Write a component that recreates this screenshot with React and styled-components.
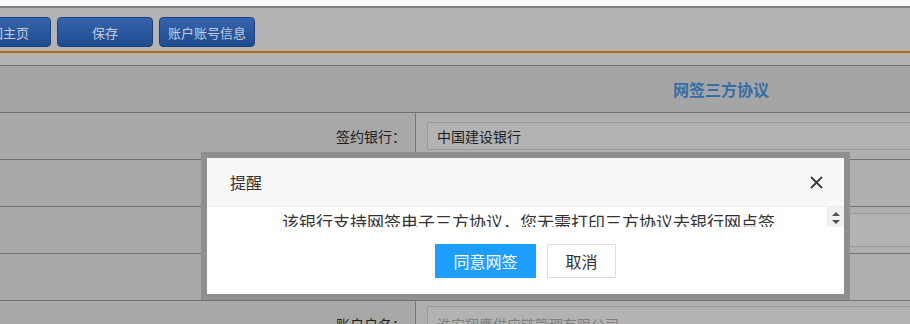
import React from 'react'
import styled, { createGlobalStyle } from 'styled-components'

const GlobalStyle = createGlobalStyle`
  html, body {
    margin: 0;
    padding: 0;
    width: 910px;
    height: 324px;
    overflow: hidden;
    background: #a9a9a9;
  }
  body {
    font-family: "Noto Sans CJK SC", "Noto Sans", "Liberation Sans", sans-serif;
  }
`

const rows = [
  { label: '签约银行：', value: '中国建设银行', box: 28 },
  { label: '开户银行：' },
  { label: '银行账号：', value: '', box: 34 },
  { label: '签约状态：' },
  { label: '账户户名：', value: '淮安翔鹰供应链管理有限公司', box: 36, muted: true, top: true },
]

export default function App() {
  return (
    <Page>
      <GlobalStyle />
      <TopStrip />
      <Toolbar>
        <ToolButton>返回主页</ToolButton>
        <ToolButton>保存</ToolButton>
        <ToolButton>账户账号信息</ToolButton>
      </Toolbar>
      <Spacer />
      <Table>
        <HeaderRow>
          <HeaderTitle>网签三方协议</HeaderTitle>
        </HeaderRow>
        {rows.map((row) => (
          <Row key={row.label}>
            <LabelCell>{row.label}</LabelCell>
            <ValueCell $top={row.top}>
              {row.box && (
                <InputBox $height={row.box} $muted={row.muted}>
                  {row.value}
                </InputBox>
              )}
            </ValueCell>
          </Row>
        ))}
      </Table>

      <Dialog>
        <DialogHeader>
          <DialogTitle>提醒</DialogTitle>
          <CloseButton>
            <svg width="13" height="13" viewBox="0 0 13 13">
              <path d="M1 1 L12 12 M12 1 L1 12" stroke="#3a3a3a" strokeWidth="1.8" fill="none" />
            </svg>
          </CloseButton>
        </DialogHeader>
        <DialogBody>
          <Message>该银行支持网签电子三方协议，您无需打印三方协议去银行网点签约，请确认是否同意网签。</Message>
          <Scrollbar>
            <Arrow $up />
            <Arrow />
          </Scrollbar>
        </DialogBody>
        <DialogActions>
          <DialogButton $primary>同意网签</DialogButton>
          <DialogButton>取消</DialogButton>
        </DialogActions>
      </Dialog>
    </Page>
  )
}

const Page = styled.div`
  position: relative;
  width: 910px;
  height: 324px;
  overflow: hidden;
  display: flex;
  flex-direction: column;
  & > * {
    flex-shrink: 0;
  }
`

const TopStrip = styled.div`
  height: 6px;
  background: #f9f9f9;
  border-bottom: 2px solid #7f7f7f;
`

const Toolbar = styled.div`
  display: flex;
  gap: 6px;
  padding: 9px 0 4px;
  margin-left: -45px;
  background: #b4b4b4;
  border-bottom: 2px solid #b36d0c;
`

const ToolButton = styled.div`
  box-sizing: border-box;
  min-width: 96px;
  height: 30px;
  padding: 0 8px;
  display: flex;
  align-items: center;
  justify-content: center;
  border: 1px solid #1b3f7c;
  border-radius: 4px;
  background: linear-gradient(#3565ad, #1f4b90);
  color: #c6ccdb;
  font-size: 13px;
  white-space: nowrap;
`

const Spacer = styled.div`
  height: 12px;
  background: #b4b4b4;
  border-bottom: 1px solid #727272;
`

const Table = styled.div`
  display: flex;
  flex-direction: column;
  & > * {
    flex-shrink: 0;
  }
`

const HeaderRow = styled.div`
  height: 46px;
  width: 1442px;
  display: flex;
  align-items: center;
  justify-content: center;
  background: #a5a5a5;
  border-bottom: 1px solid #727272;
`

const HeaderTitle = styled.div`
  color: #336ea6;
  font-size: 16px;
  font-weight: bold;
`

const Row = styled.div`
  display: flex;
  height: 46px;
  border-bottom: 1px solid #727272;
`

const LabelCell = styled.div`
  box-sizing: border-box;
  width: 416px;
  flex-shrink: 0;
  padding-right: 9px;
  display: flex;
  align-items: center;
  justify-content: flex-end;
  background: #a8a8a8;
  border-right: 1px solid #777777;
  color: #1e1e1e;
  font-size: 14px;
`

const ValueCell = styled.div`
  flex: 1;
  display: flex;
  align-items: ${(p) => (p.$top ? 'flex-start' : 'center')};
  padding: ${(p) => (p.$top ? '5px' : '0')} 0 0 11px;
  background: #afafaf;
`

const InputBox = styled.div`
  box-sizing: border-box;
  width: 520px;
  height: ${(p) => p.$height}px;
  padding-left: 9px;
  display: flex;
  align-items: center;
  border: 1px solid #9a9a9a;
  background: #b3b3b3;
  color: ${(p) => (p.$muted ? '#7e7e7e' : '#1e1e1e')};
  font-size: 14px;
  white-space: nowrap;
`

const Dialog = styled.div`
  position: absolute;
  left: 201px;
  top: 152px;
  width: 637px;
  height: 136px;
  border: 6px solid #8f8f8f;
  background: #ffffff;
  display: flex;
  flex-direction: column;
`

const DialogHeader = styled.div`
  height: 48px;
  flex-shrink: 0;
  display: flex;
  align-items: center;
  justify-content: space-between;
  padding: 0 21px 0 23px;
  background: #f8f8f8;
  border-bottom: 1px solid #eeeeee;
`

const DialogTitle = styled.div`
  color: #333333;
  font-size: 16px;
`

const CloseButton = styled.div`
  display: flex;
  width: 13px;
  height: 13px;
`

const DialogBody = styled.div`
  display: flex;
  height: 20px;
  flex-shrink: 0;
  overflow: hidden;
`

const Message = styled.div`
  flex: 1;
  padding: 4px 45px 0 75px;
  color: #333333;
  font-size: 17px;
  line-height: 22px;
  overflow: hidden;
`

const Scrollbar = styled.div`
  width: 17px;
  flex-shrink: 0;
  display: flex;
  flex-direction: column;
  align-items: center;
  justify-content: space-between;
  padding: 5px 0 3px;
  box-sizing: border-box;
  background: #f1f1f1;
`

const Arrow = styled.span`
  width: 0;
  height: 0;
  border-left: 4px solid transparent;
  border-right: 4px solid transparent;
  ${(p) =>
    p.$up ? 'border-bottom: 4px solid #505050;' : 'border-top: 4px solid #505050;'}
`

const DialogActions = styled.div`
  flex: 1;
  display: flex;
  justify-content: center;
  align-items: flex-start;
  gap: 11px;
  padding-top: 17px;
`

const DialogButton = styled.div`
  box-sizing: border-box;
  height: 34px;
  width: ${(p) => (p.$primary ? '101px' : '69px')};
  display: flex;
  align-items: center;
  justify-content: center;
  background: ${(p) => (p.$primary ? '#1e9fff' : '#ffffff')};
  border: 1px solid ${(p) => (p.$primary ? '#1e9fff' : '#dedede')};
  color: ${(p) => (p.$primary ? '#ffffff' : '#333333')};
  font-size: 16px;
`
